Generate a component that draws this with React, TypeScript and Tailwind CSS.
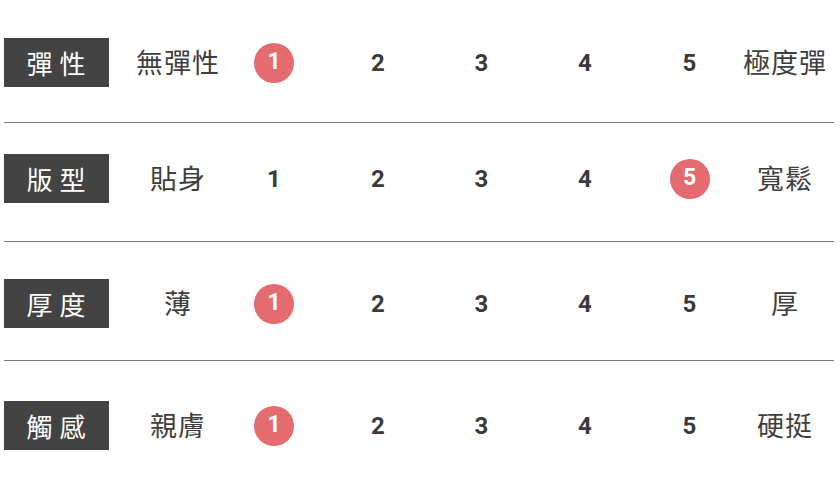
const rows = [
  { label: '彈性', low: '無彈性', high: '極度彈', pick: 1, pt: 'pt-[38px]', pb: 'pb-[35px]' },
  { label: '版型', low: '貼身', high: '寬鬆', pick: 5, pt: 'pt-[31px]', pb: 'pb-[38px]' },
  { label: '厚度', low: '薄', high: '厚', pick: 1, pt: 'pt-[37px]', pb: 'pb-[32px]' },
  { label: '觸感', low: '親膚', high: '硬挺', pick: 1, pt: 'pt-[40px]', pb: 'pb-[30px]' },
]

const numCells = [
  { n: 1, w: 'w-[104px]' },
  { n: 2, w: 'w-[104px]' },
  { n: 3, w: 'w-[103px]' },
  { n: 4, w: 'w-[104px]' },
  { n: 5, w: 'w-[105px]' },
]

const cjk = "font-['Noto_Sans_CJK_TC','Noto_Sans_CJK_SC',sans-serif]"

function Row({ row, last }: { row: (typeof rows)[number]; last: boolean }) {
  return (
    <div>
      <div className={`flex items-center pl-[4px] ${row.pt} ${row.pb}`}>
        <div
          className={`flex h-[49px] w-[105px] items-center justify-center bg-[#434343] pl-[6px] text-[26px] tracking-[7px] text-white ${cjk}`}
        >
          {row.label}
        </div>
        <div className={`ml-[25px] w-[88px] text-center text-[27px] tracking-[1px] text-[#3e3e3e] ${cjk}`}>
          {row.low}
        </div>
        {numCells.map((c) => (
          <div key={c.n} className={`flex ${c.w} justify-center`}>
            {row.pick === c.n ? (
              <div className="flex h-[40px] w-[40px] items-center justify-center rounded-full bg-[#e46b6f] font-['Roboto',sans-serif] text-[23px] font-bold text-white">
                {c.n}
              </div>
            ) : (
              <div className="flex h-[40px] items-center font-['Roboto',sans-serif] text-[24px] font-bold text-[#3a3a3a]">
                {c.n}
              </div>
            )}
          </div>
        ))}
        <div className={`w-[86px] text-center text-[27px] tracking-[1px] text-[#3e3e3e] ${cjk}`}>{row.high}</div>
      </div>
      {!last && <div className="ml-[4px] w-[830px] border-t border-[#7a7a7a]" />}
    </div>
  )
}

export default function App() {
  return (
    <div className="h-[489px] w-[840px] overflow-hidden bg-white">
      {rows.map((r, i) => (
        <Row key={r.label} row={r} last={i === rows.length - 1} />
      ))}
    </div>
  )
}
